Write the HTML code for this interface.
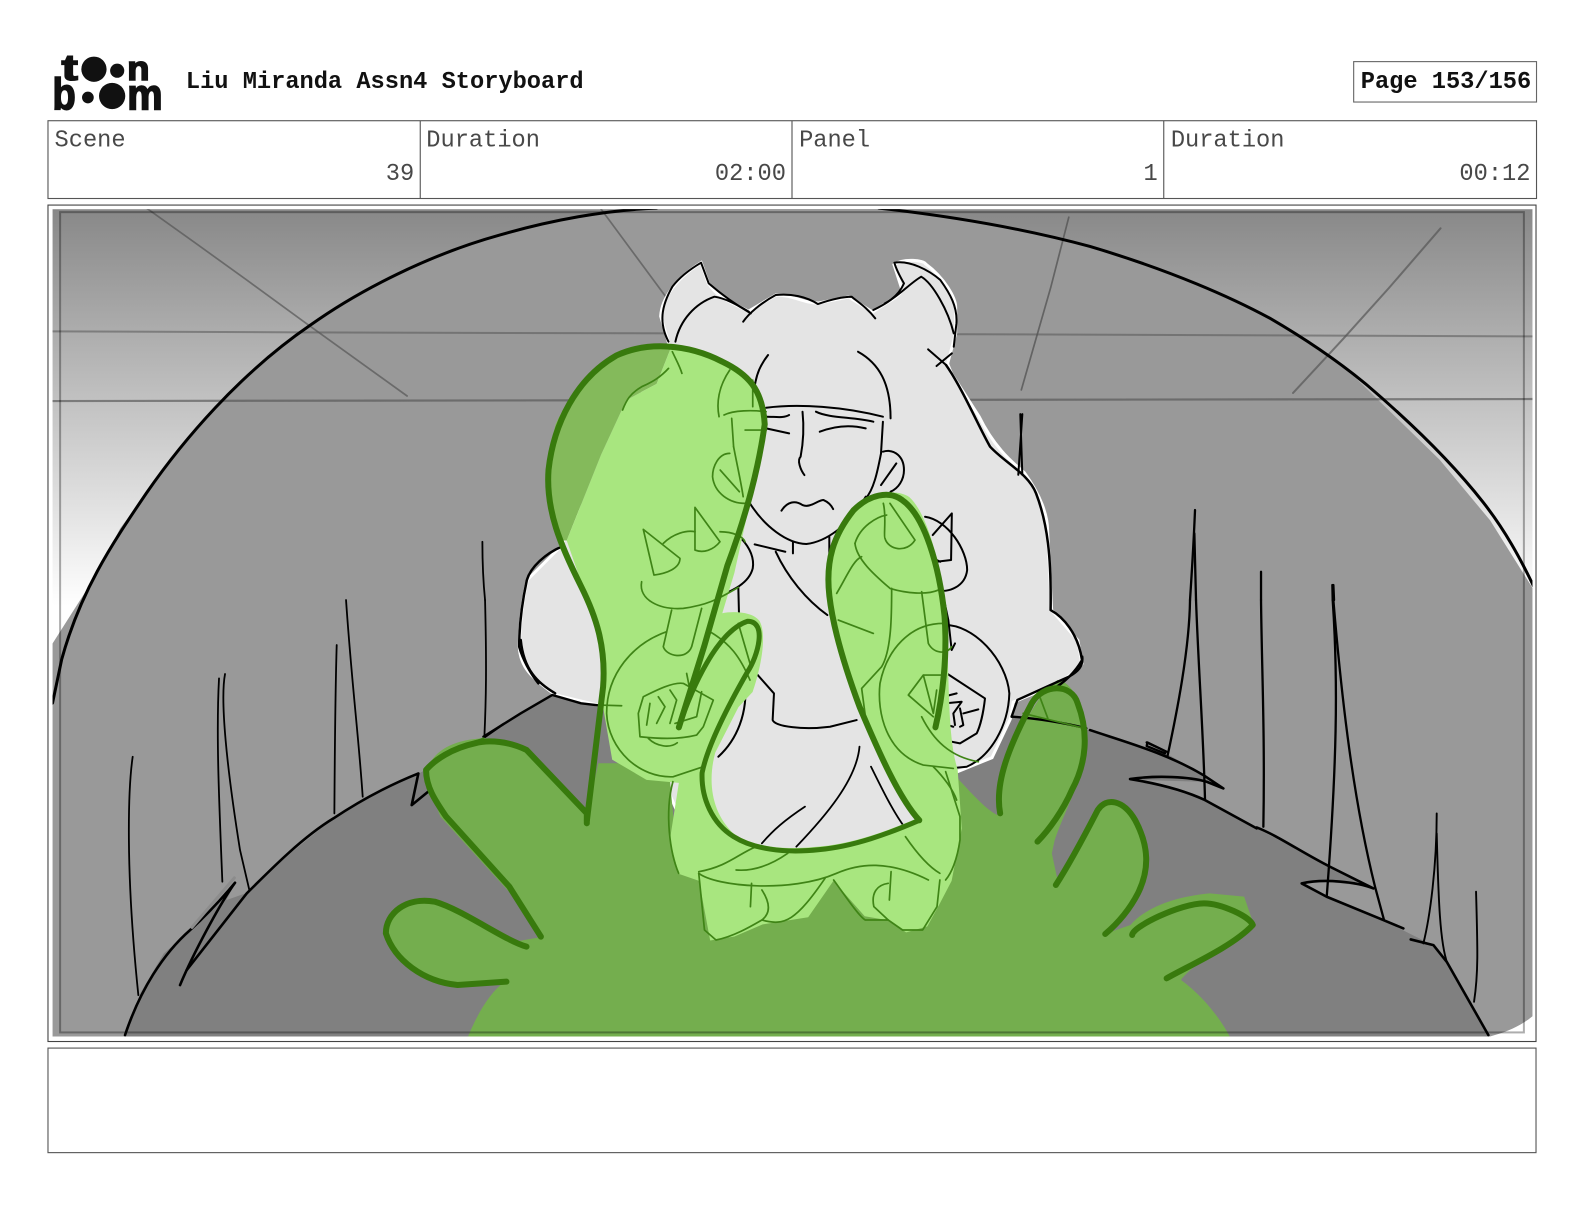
<!DOCTYPE html>
<html><head><meta charset="utf-8"><title>Storyboard</title>
<style>
html,body{margin:0;padding:0;background:#fff;width:1584px;height:1224px;overflow:hidden}
svg{display:block}
.n *{vector-effect:non-scaling-stroke;fill:none;stroke-linecap:round;stroke-linejoin:round}
.h{font-family:"Liberation Mono",monospace;font-weight:bold;font-size:23.45px;fill:#111}
.t{font-family:"Liberation Mono",monospace;font-size:23.45px;fill:#484848}
.l{font-family:"Liberation Sans",sans-serif;font-weight:bold;fill:#111;stroke:#111;stroke-width:1.6}
</style></head><body>
<svg xmlns="http://www.w3.org/2000/svg" width="1584" height="1224" viewBox="0 0 1568 1211.64">
<defs>
<linearGradient id="g" x1="0" y1="207" x2="0" y2="600" gradientUnits="userSpaceOnUse"><stop offset="0" stop-color="#888"/><stop offset="1" stop-color="#fff"/></linearGradient>
<clipPath id="c"><rect x="52" y="207" width="1465" height="819"/></clipPath>
</defs>

<!-- logo -->
<text class="l" x="61" y="79" font-size="36" textLength="16" lengthAdjust="spacingAndGlyphs">t</text>
<circle cx="93" cy="68.500" r="12.500" fill="#111"/><circle cx="116" cy="70" r="7" fill="#111"/>
<text class="l" x="126" y="79" font-size="34" textLength="22" lengthAdjust="spacingAndGlyphs">n</text>
<text class="l" x="52" y="108.500" font-size="44" textLength="23" lengthAdjust="spacingAndGlyphs">b</text>
<circle cx="87" cy="96.500" r="5.800" fill="#111"/><circle cx="111" cy="95" r="13" fill="#111"/>
<text class="l" x="126" y="108.500" font-size="43" textLength="35" lengthAdjust="spacingAndGlyphs">m</text>

<text class="h" x="184" y="87">Liu Miranda Assn4 Storyboard</text>
<rect x="1340" y="61" width="181" height="40" fill="#fff" stroke="#666" stroke-width="1.1"/>
<text class="h" x="1347" y="87">Page 153/156</text>

<!-- table -->
<rect x="47.500" y="119.500" width="1473.500" height="77" fill="#fff" stroke="#555" stroke-width="1.1"/>
<path d="M416 119.500V196.500M784 119.500V196.500M1152 119.500V196.500" stroke="#555" stroke-width="1.1"/>
<text class="t" x="54" y="145">Scene</text><text class="t" x="422" y="145">Duration</text><text class="t" x="791" y="145">Panel</text><text class="t" x="1159" y="145">Duration</text>
<text class="t" x="410" y="178" text-anchor="end">39</text><text class="t" x="778" y="178" text-anchor="end">02:00</text><text class="t" x="1146" y="178" text-anchor="end">1</text><text class="t" x="1515" y="178" text-anchor="end">00:12</text>

<rect x="47.500" y="203" width="1473" height="828" fill="#fff" stroke="#444" stroke-width="1.1"/>
<rect x="47.500" y="1037.500" width="1473" height="103.500" fill="#fff" stroke="#555" stroke-width="1.1"/>

<g clip-path="url(#c)">
<rect x="52" y="207" width="1465" height="819" fill="url(#g)"/>
<!-- dome -->
<path fill="#999" d="M52,637 L73,604 L94,571 L119,523 L145,488 C181,436 237,370 307,322 C356,287 425,252 495,232.600 C545,218 600,208 650,206 L870,206 C950,215 1020,228 1079,244 C1160,268 1220,295 1257,315 C1300,340 1330,362 1349,381 L1425,455 L1475,515 L1517,582 L1517,1006 C1505,1016 1490,1022 1475,1026 L52,1026 Z"/>
<!-- thin background lines -->
<g class="n">
<path stroke="#555" stroke-opacity=".55" stroke-width="2" d="M52,328 L300,329 L1000,331 L1517,333"/>
<path stroke="#555" stroke-opacity=".65" stroke-width="2.200" d="M52,397 L1517,395"/>
<path stroke="#555" stroke-opacity=".7" stroke-width="1.700" d="M145,206 L194,241 L244,277 L303,320 L403,392"/>
<path stroke="#555" stroke-opacity=".7" stroke-width="1.700" d="M595,207 L660,295"/>
<path stroke="#555" stroke-opacity=".8" stroke-width="1.700" d="M1058,215 L1040,285 L1011,386"/>
<path stroke="#555" stroke-opacity=".7" stroke-width="2" d="M1426,226 L1375,285 L1330,335 L1280,389"/>
</g>
<!-- ground -->
<path fill="#808080" d="M124,1026 L139,983 L162,944 L188,921 L233,874 L224,891 L244,884 L287,845 L330,810 L360,790 L414,766 L480,729 L495,718 L548,688 L1004,694 L1000,709 L1079,723 L1155,746 L1191,767 L1211,780 L1194,774 L1122,772 L1145,777 L1193,792 L1244,820 L1317,858 L1360,878 L1315,873 L1288,874 L1313,888 L1369,911 L1419,936 L1432,952 L1473,1026 Z"/>
<!-- character -->
<path fill="#e4e4e4" stroke="#fff" stroke-width="3" d="M662,340 L654,313 C655,295 670,275 694,260 L701,280 C710,295 725,300 741,308 L768,292 C785,292 795,300 810,300 L840,294 L864,309 C875,300 890,295 893,287 L885,262 C895,255 915,258 916,261 C935,275 946,295 946,304 L946,330 L938,360 L942,370 L969,412 C985,445 1005,460 1014,468 C1030,490 1037,510 1037,525 L1041,604 L1067,634 L1071,657 C1060,672 1040,680 1003,695 L1000,712 L982,750 L945,765 L930,870 L700,870 L660,780 L600,700 L550,688 C525,670 515,660 514,640 C515,610 518,590 522,574 L555,541 Z"/>
<!-- hand -->
<g transform="translate(356.4,633.5) scale(.5683,.33)"><path fill="#74ae4e" d="M188,1190 C205,1120 225,1060 252,1025 L180,1040 C130,1030 70,990 45,900 C45,830 70,785 110,778 C160,785 230,870 270,905 L320,890 L262,760 L140,530 L115,420 C115,350 150,300 215,295 C260,300 290,320 320,380 L395,530 L415,370 L460,370 L540,425 L555,700 L824,720 L1040,560 L1030,395 C1060,450 1090,510 1110,525 L1112,450 C1130,350 1170,170 1215,120 C1240,125 1260,190 1265,300 C1265,400 1230,500 1210,600 L1205,640 L1215,720 C1240,650 1270,520 1310,480 C1340,490 1370,590 1372,650 C1375,730 1330,830 1300,880 L1342,855 C1370,800 1420,770 1480,760 L1540,770 L1557,855 C1520,910 1450,970 1430,1020 C1470,1070 1500,1140 1515,1190 Z"/></g>

<!-- black dome + ground lines -->
<g class="n" stroke="#000">
<path stroke-width="3" d="M52,696 L61,653 C79,587 109,541 145,488 C181,436 237,370 307,322 C356,287 425,252 495,232.600 C545,218 600,208 650,206"/>
<path stroke-width="3" d="M870,206 C950,215 1020,228 1079,244 C1160,268 1220,295 1257,315 C1300,340 1330,362 1353,381 C1395,417 1435,455 1468,497 C1490,525 1505,553 1518,580"/>
<g transform="translate(39.6,198) scale(.33)" stroke-width="1.800">
<path d="M1327,1025 C1327,1100 1330,1150 1335,1200"/>
</g>
<g transform="translate(1079,198) scale(.33)" stroke-width="2.300">
<path d="M315,930 C310,1050 305,1120 300,1200"/>
<path d="M313,1000 L318,1200"/>
<path d="M513,1115 L513,1200"/>
<path d="M727,1155 L728,1200 M730,1155 L732,1200"/>
</g>
<g transform="translate(39.6,594) scale(.33)" stroke-width="1.800">
<path d="M278,470 C265,560 255,800 295,1185"/>
<path d="M537,235 C528,400 537,600 547,845"/>
<path d="M555,222 C540,300 560,500 600,750 L628,870"/>
<path d="M890,135 C885,300 884,500 883,640"/>
<path d="M918,0 C935,250 955,400 968,590"/>
<path d="M1335,0 C1340,200 1338,300 1333,410"/>
<path stroke-width="2.600" d="M255,1305 C300,1170 370,1060 450,990 C500,945 550,890 585,848 C540,910 460,1060 420,1155"/>
<path stroke-width="2.600" d="M440,1110 L620,880 C700,800 790,710 880,655 C970,595 1060,550 1135,520 L1115,615 L1170,570"/>
<path stroke-width="2.400" d="M1335,410 L1390,372"/>
</g>
<g transform="translate(1079,594) scale(.33)" stroke-width="2.300">
<path d="M300,0 C298,150 260,340 232,470 M170,427 L230,455 L172,427 L170,438 L225,460"/>
<path d="M318,0 C325,200 340,400 345,600"/>
<path d="M513,0 C515,200 525,400 520,680"/>
<path d="M728,0 C745,250 740,500 710,890"/>
<path d="M730,0 C755,300 790,600 855,860 L882,960"/>
<path stroke-width="1.900" d="M1040,640 C1040,800 1020,950 1000,1030"/>
<path stroke-width="1.900" d="M1040,700 C1045,900 1050,1030 1072,1090"/>
<path stroke-width="1.900" d="M1158,875 C1163,1050 1165,1120 1152,1205"/>
<path stroke-width="2.600" d="M0,390 C120,430 230,460 340,525 L400,565 L350,545 C300,530 200,525 120,537 C200,550 280,570 345,600 L500,685"/>
<path stroke-width="2.600" d="M500,682 C560,705 640,760 720,800 L850,865 C800,845 700,835 635,850 L710,890 L880,960 L940,985"/>
<path stroke-width="2.600" d="M962,1018 L1030,1035 L1070,1085 L1195,1305"/>
</g>
<path stroke="#8c8c8c" stroke-width="3" d="M190,918 L232,869"/>
<!-- spike behind hair -->
<path stroke-width="2" d="M1012,410 L1008,470 M1010,410 L1012,470"/>
<g transform="translate(356.4,633.5) scale(.5683,.33)" stroke-width="2.400">
<path d="M215,290 L280,220 L335,165 L385,190 L420,197"/>
<path d="M280,0 C285,90 310,130 340,160"/>
<path d="M1135,230 C1180,235 1230,250 1265,265"/>
<path d="M1258,50 C1260,80 1250,95 1235,110 L1145,180 L1135,230"/>
<path stroke-width="1.800" d="M775,500 C740,540 720,570 700,610"/>
<path stroke-width="1.800" d="M870,320 C865,420 810,530 760,620"/>
<path stroke-width="1.800" d="M890,380 C910,450 930,520 950,565"/>
</g>
<!-- face/hair lines -->
<g transform="translate(495,237.6) scale(.379,.33)" stroke-width="2">
<path d="M440,305 C415,250 420,200 450,140 C470,110 500,85 525,68 L545,130 C570,155 610,190 655,220"/>
<path d="M458,305 C470,240 510,190 560,170 C590,175 620,195 650,215"/>
<path d="M635,245 C650,220 680,190 720,165 C760,160 800,170 830,192 C860,180 890,170 918,170 C940,190 960,205 980,235"/>
<path d="M975,210 C1010,190 1040,170 1055,130 C1045,110 1035,90 1030,68 C1070,60 1120,90 1150,120 C1175,160 1195,200 1192,250 L1185,320"/>
<path d="M1005,190 C1040,170 1070,130 1100,110 C1130,130 1170,210 1185,280"/>
<path d="M1118,328 L1165,375 M1180,340 L1140,378"/>
<path stroke-width="2.500" d="M1165,375 C1210,450 1250,560 1280,620 C1320,670 1380,700 1400,760 C1430,850 1440,950 1438,1110 C1470,1130 1510,1180 1520,1260 C1500,1300 1470,1330 1440,1350"/>
<path d="M700,345 C680,375 670,400 665,440 M935,335 C990,370 1020,430 1020,535"/>
<path d="M695,503 C780,490 900,500 1000,530 M1000,545 L995,640"/>
<path d="M695,530 C720,530 740,535 755,525 M695,565 L755,580"/>
<path d="M825,515 C860,535 920,530 975,545 M835,575 C880,555 920,555 955,565"/>
<path d="M790,515 C795,570 790,620 785,650 C775,660 785,690 795,705"/>
<path d="M735,812 C750,785 770,780 790,795 C810,805 830,780 845,780 C855,785 865,795 870,807"/>
<path d="M650,785 C690,860 750,910 800,912 C850,905 910,860 955,770 M995,640 C985,700 975,750 955,775"/>
<path d="M1000,635 C1030,625 1055,650 1055,690 C1055,720 1040,745 1020,755 M1035,670 L995,735"/>
<path d="M665,913 L745,935 M765,905 L765,940 M860,890 L860,940 M875,915 L875,945"/>
<path d="M720,935 C750,1010 800,1080 855,1125"/>
<path d="M1130,885 L1180,820 L1178,960 L1140,965 M1110,830 C1170,840 1220,930 1220,990 C1215,1040 1170,1060 1140,1050 M1110,920 C1120,950 1140,960 1150,965"/>
<path d="M630,895 C650,920 665,950 660,985 C650,1030 610,1050 560,1075"/>
<path stroke-width="2.500" d="M160,920 C120,940 80,980 70,1020 C55,1100 50,1170 50,1220 C60,1260 80,1300 100,1330"/>
</g>
<g transform="translate(584,495) scale(.33)" stroke-width="2">
<path d="M445,260 L447,340"/>
<path d="M490,510 L552,580 L548,660 C555,680 640,690 720,680 L800,660"/>
<path d="M465,540 C475,640 440,720 385,770"/>
<path d="M1060,375 C1150,370 1250,480 1258,580 C1255,680 1200,770 1130,800 L1080,805"/>
<path d="M1070,520 L1185,595 C1180,640 1170,680 1160,700 L1110,730 L1060,720"/>
<path d="M1060,590 L1100,580 M1065,610 L1115,605 L1090,640 L1095,675 M1110,625 L1120,675 L1110,680 M1120,640 L1165,628 M1055,670 L1090,680"/>
<path d="M1058,280 L1075,360 L1085,450 L1095,430"/>
</g>
</g>

<!-- light green -->
<path fill="#84ba5b" d="M665,342 C620,340 575,365 550,420 C540,460 540,490 555,535 L561,535 L595,450 L620,396 L650,380 Z"/>
<path fill="#a8e67f" d="M665,342 C690,345 735,360 750,385 C758,400 758,425 755,440 L727,567 L715,607 C725,605 745,605 752,615 C760,630 752,665 745,685 L731,700 L708,745 C700,775 705,805 726,825 C745,838 775,842 811,838 C845,835 880,822 908,810 C890,790 870,745 851,700 C838,665 825,625 821,590 C817,555 825,530 845,505 C860,490 885,482 900,492 C915,505 932,550 937,620 C940,680 938,730 948,762 L952,820 L942,872 L930,895 L918,917 L897,923 L879,911 L856,907 L825,872 L800,908 L755,915 L727,927 L703,931 L692,872 L672,865 L663,832 L672,775 L640,772 L606,752 L597,700 L597,640 L580,590 L561,535 L595,450 L620,396 L650,380 Z"/>

<!-- thin green lines -->
<g class="n" stroke="#3f8416" stroke-width="1.700">
<g transform="translate(584,495) scale(.33)">
<path d="M192,225 L160,88 L270,175 C270,205 230,220 192,225 Z"/>
<path d="M315,22 L390,125 C370,150 340,160 315,150 Z"/>
<path d="M220,130 C250,100 290,90 315,95 M390,95 C430,95 460,110 465,125"/>
<path d="M155,245 C145,300 210,330 280,325 C350,315 380,300 445,262"/>
<path d="M245,330 L220,440 C230,470 290,480 305,440 L335,325"/>
<path d="M230,395 C130,430 50,520 50,640 C55,750 150,835 250,830 L340,800"/>
<path d="M30,615 L95,617 M360,395 C420,430 450,470 480,540 M445,370 L480,490"/>
<path d="M160,590 C200,570 250,545 280,550 L370,600 L340,680 L320,705 C260,720 200,715 150,710 L145,640 Z"/>
<path d="M180,610 L170,675 M205,590 L225,620 L200,670 M240,570 L260,600 L240,670 M290,520 L300,570 M335,575 L320,650 L255,670 M175,715 C200,740 240,745 262,728"/>
<path d="M795,130 C800,180 860,230 900,265 C950,280 1010,285 1045,270"/>
<path d="M880,10 C890,50 880,110 885,115 C895,150 950,160 975,120 L900,10"/>
<path d="M795,130 C810,80 860,50 890,45 M740,280 C770,230 790,180 815,170"/>
<path d="M905,265 C905,340 905,450 875,500 L815,565 L825,640 M745,360 L850,400"/>
<path d="M995,275 L1015,430 C1030,460 1070,465 1085,440"/>
<path d="M1060,370 C960,370 890,450 870,550 C860,640 890,760 1000,795 L1090,805"/>
<path d="M1000,525 L955,585 L1030,650 M1000,525 L1060,525 M1000,525 L1030,640 M1040,570 L1030,640"/>
<path d="M995,650 C1030,720 1080,770 1165,785 M1030,800 C1060,830 1090,870 1100,900"/>
</g>
<g transform="translate(495,237.6) scale(.379,.33)">
<path d="M450,335 C460,360 470,380 475,400 M440,385 C420,410 400,425 370,440 C340,460 330,480 320,510"/>
<path d="M600,390 C570,440 565,490 572,530 M660,420 L660,500"/>
<path d="M585,525 C610,510 660,510 695,515 M605,535 L610,620 M640,570 L695,570"/>
<path d="M600,640 C570,640 555,680 555,710 C560,760 600,790 640,790 M575,690 L625,755 M610,620 C620,680 630,730 635,770"/>
</g>
<g transform="translate(356.4,633.5) scale(.5683,.33)">
<path d="M545,425 C530,520 540,640 555,700"/>
<path d="M1020,395 L1045,530 L1045,600 C1040,660 1030,700 1020,720"/>
<path d="M950,590 C970,640 990,680 1010,700"/>
<path d="M590,695 C640,680 660,640 690,620 M655,690 C690,695 720,670 745,640"/>
<path d="M590,700 C620,740 750,760 830,700 C870,670 920,660 990,720"/>
<path d="M590,700 L600,870 L620,900 C650,890 680,860 700,840 C740,860 760,840 810,715"/>
<path d="M682,730 L680,800 M700,750 C715,790 715,820 700,840"/>
<path d="M825,720 C850,780 870,830 880,840 L920,840"/>
<path d="M925,695 L922,780 M920,730 C900,735 890,760 895,800 L920,840 L945,870 L980,870 L1005,800 L1010,720"/>
<path d="M1155,220 L1255,262 M1185,175 L1198,235"/>
<path d="M120,375 C150,340 190,310 215,295"/>
</g>
</g>

<!-- main green strokes -->
<g class="n" stroke="#387a0d" stroke-width="6">
<path d="M581,812 L597,680 C600,640 590,610 575,580 C555,540 540,505 543,465 C548,420 570,375 610,352 C640,338 680,340 715,358 C740,370 755,385 757,420 C750,470 735,520 720,560 L697,640 L672,720"/>
<path stroke-width="5" d="M672,720 C685,680 710,625 740,615 C760,615 750,650 740,665 C720,700 700,740 695,765 C694,790 705,815 726,828 C745,840 775,845 811,841 C845,838 880,825 910,812"/>
<path d="M910,812 C890,790 870,745 851,700 C838,665 825,625 821,590 C817,555 825,530 845,505 C860,490 880,485 893,495 C915,510 930,560 935,610 C938,650 933,690 926,720"/>
<g transform="translate(356.4,633.5) scale(.5683,.33)">
<path d="M395,550 L395,520 L290,330 C260,305 225,298 200,310 C160,325 130,360 115,390 C115,440 130,480 150,530 L260,740 L315,890"/>
<path d="M290,920 C250,900 180,810 130,785 C80,770 45,820 45,880 C60,960 110,1025 170,1035 L255,1025"/>
<path d="M1115,520 C1105,430 1130,320 1170,190 C1190,130 1240,130 1250,190 C1270,280 1265,370 1240,450 C1225,510 1200,570 1180,605"/>
<path d="M1212,735 C1240,660 1270,560 1285,510 C1300,470 1330,480 1350,540 C1375,620 1375,690 1355,760 C1340,810 1320,850 1298,882"/>
<path d="M1345,885 C1345,860 1430,790 1470,790 C1500,790 1550,830 1555,855 C1520,920 1440,980 1405,1015"/>
</g>
</g>

<!-- inner frame guide -->
<rect x="59.500" y="210" width="1449" height="812" fill="none" stroke="#000" stroke-opacity=".32" stroke-width="2"/>
</g>
</svg>
</body></html>
